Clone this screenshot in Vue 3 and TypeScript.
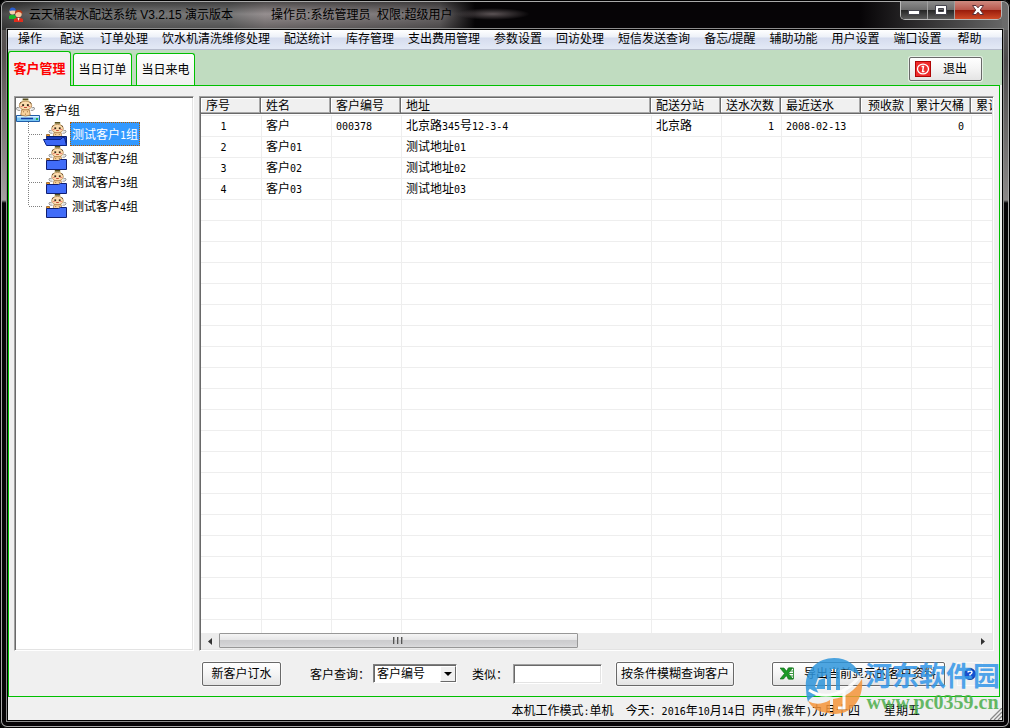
<script setup lang="ts">
import { h, ref, type FunctionalComponent } from 'vue'

// Chinese text whose Latin runs are set in a narrow half-width face
const Mixed: FunctionalComponent<{ text: string }> = (props) =>
  props.text
    .split(/([\x20-\x7e]+)/)
    .filter((run) => run !== '')
    .map((run) => h('span', { class: /^[\x20-\x7e]/.test(run) ? 'half' : 'full' }, run))
Mixed.props = ['text']

const menus: string[] = [
  '操作', '配送', '订单处理', '饮水机清洗维修处理', '配送统计', '库存管理', '支出费用管理', '参数设置',
  '回访处理', '短信发送查询', '备忘/提醒', '辅助功能', '用户设置', '端口设置', '帮助',
]
const tabs: string[] = ['客户管理', '当日订单', '当日来电']
const activeTab = ref(0)

const groups: string[] = ['测试客户1组', '测试客户2组', '测试客户3组', '测试客户4组']
const activeGroup = ref(0)

interface Column { title: string; cls: string }
const columns: Column[] = [
  { title: '序号', cls: 'c-no' },
  { title: '姓名', cls: 'c-name' },
  { title: '客户编号', cls: 'c-code' },
  { title: '地址', cls: 'c-addr' },
  { title: '配送分站', cls: 'c-station' },
  { title: '送水次数', cls: 'c-times num' },
  { title: '最近送水', cls: 'c-last' },
  { title: '预收款', cls: 'c-prepaid num' },
  { title: '累计欠桶', cls: 'c-owed num' },
  { title: '累计欠款', cls: 'c-debt' },
]
const customers: string[][] = [
  ['1', '客户', '000378', '北京路345号12-3-4', '北京路', '1', '2008-02-13', '', '0', ''],
  ['2', '客户01', '', '测试地址01', '', '', '', '', '', ''],
  ['3', '客户02', '', '测试地址02', '', '', '', '', '', ''],
  ['4', '客户03', '', '测试地址03', '', '', '', '', '', ''],
]
const blankRows = 40
const field = ref('客户编号')
const keyword = ref('')
</script>

<template>
  <div class="window">
    <header class="titlebar">
      <svg class="app-icon" viewBox="0 0 16 16" width="16" height="16">
        <path d="M1 9q3-3 7 0v3H1z" fill="#19b52c" />
        <circle cx="4.500" cy="4.500" r="3" fill="#f4cfae" />
        <path d="M1.500 4q0-3.500 3-3.500T8 3.500H4z" fill="#2b5fd0" />
        <path d="M6 15v-3q4-3 9 0v3z" fill="#e02c1c" />
        <circle cx="10.500" cy="7" r="3.200" fill="#f8c69c" />
        <path d="M7 7q-.5-4 3.500-4T14.500 7q-2-2-4-2T7 7z" fill="#b8391a" />
        <path d="M9.500 11l1 3 1-3z" fill="#fff" />
      </svg>
      <h1 class="caption">云天桶装水配送系统 V3.2.15 演示版本</h1>
      <span class="operator">操作员:系统管理员&nbsp; 权限:超级用户</span>
      <div class="sysbuttons">
        <button class="sys" aria-label="最小化">
          <svg viewBox="0 0 14 12" width="14" height="12"><rect x="1.500" y="6.500" width="11" height="4" fill="#fff" stroke="#45454f" /></svg>
        </button>
        <button class="sys" aria-label="最大化">
          <svg viewBox="0 0 14 12" width="14" height="12"><path d="M1.500 1.500h11v9h-11zM4.500 4.500v3h5v-3z" fill="#fff" fill-rule="evenodd" stroke="#45454f" /></svg>
        </button>
        <button class="sys close" aria-label="关闭">
          <svg viewBox="0 0 14 12" width="14" height="12"><path d="M1.500 1.500h3.500l2 2.300 2-2.300h3.500L9.300 6l3.200 4.500H9L7 8.200l-2 2.300H1.500L4.700 6z" fill="#fff" stroke="#5a3038" /></svg>
        </button>
      </div>
    </header>

    <div class="client">
      <nav class="menubar">
        <button v-for="m in menus" :key="m" class="menu">{{ m }}</button>
      </nav>

      <div class="tabstrip">
        <button
          v-for="(t, i) in tabs"
          :key="t"
          class="tab"
          :class="{ active: i === activeTab }"
          @click="activeTab = i"
        >{{ t }}</button>
        <button class="btn exit">
          <svg viewBox="0 0 16 16" width="16" height="16">
            <rect width="16" height="16" fill="#b00606" />
            <rect x="1" y="1" width="14" height="14" fill="#ef2b2b" />
            <ellipse cx="8" cy="8" rx="5.500" ry="4.800" fill="none" stroke="#fff" stroke-width="1.300" />
            <path d="M6.500 5.500h2l-1 5h2" fill="none" stroke="#fff" stroke-width="1.400" />
          </svg>
          <span>退出</span>
        </button>
      </div>

      <main class="panel">
        <svg class="defs" width="0" height="0">
          <symbol id="baby" viewBox="0 0 20 19">
            <rect x="7" y="0" width="6" height="2" fill="#59501f" />
            <rect x="6" y="2" width="8" height="1" fill="#e9dfa0" />
            <ellipse cx="10" cy="7.500" rx="6.500" ry="4.800" fill="#fbdcae" stroke="#a5753c" stroke-width=".8" />
            <path d="M4 5.500l1.500-2M16 5.500l-1.500-2" stroke="#5a3b17" stroke-width="1" />
            <rect x="6.500" y="6" width="2" height="2" fill="#372817" />
            <rect x="11.500" y="6" width="2" height="2" fill="#372817" />
            <rect x="5" y="8" width="2" height="1" fill="#f0726a" />
            <rect x="13" y="8" width="2" height="1" fill="#f0726a" />
            <path d="M8.500 9.500h3" stroke="#c0392b" />
            <path d="M3.500 10Q0 8.500.5 11q.5 2 4 1.500M16.500 10q3.500-1.500 3 1-.5 2-4 1.500" fill="#fff" stroke="#777" stroke-width=".9" />
            <path d="M6 12h8l1 5.500q-5 2-10 0z" fill="#f8d29d" stroke="#a5753c" stroke-width=".8" />
            <path d="M7.500 14h1M11.500 14h1M9.500 16.500h1" stroke="#93652f" />
          </symbol>
        </svg>

        <div class="workarea">
          <div class="tree sunken">
            <div class="root">
              <svg viewBox="0 0 24 24" width="24" height="24">
                <path d="M.5 17.500h23v6H.5z" fill="#78c5f4" stroke="#205da8" />
                <path d="M1 18h22v1.500H1z" fill="#d5f0ff" />
                <path d="M5 20.500h12" stroke="#123ca0" stroke-width="1.500" />
                <rect x="20" y="20" width="2" height="2" fill="#21b24b" />
                <use href="#baby" x="0" y="0" width="19" height="19" />
              </svg>
              <span class="root-label">客户组</span>
            </div>
            <ul class="branch">
              <li v-for="(g, i) in groups" :key="g" class="leaf">
                <svg viewBox="0 0 24 24" width="24" height="24">
                  <use href="#baby" x="5" y="0" width="19" height="17" />
                  <path d="M3.500 14.500v-2h3v2" fill="#f59a28" stroke="#7d4a10" stroke-width=".7" />
                  <path v-if="i === activeGroup" d="M3.500 14.500h20v9h-19z" fill="#1a3cbc" stroke="#091e6c" />
                  <path v-if="i === activeGroup" d="M.5 17.500h17l2-2h2l2 8h-20z" fill="#3b66f5" stroke="#0a2384" />
                  <path v-else d="M3.500 14.500h12l2-1h6v10h-20z" fill="#416cf8" stroke="#101e70" />
                </svg>
                <button class="leaf-label" :class="{ selected: i === activeGroup }" @click="activeGroup = i">
                  <Mixed :text="g" />
                </button>
              </li>
            </ul>
          </div>

          <div class="grid sunken">
            <div class="viewport">
              <table>
                <colgroup><col v-for="c in columns" :key="c.title" :class="c.cls" /></colgroup>
                <thead>
                  <tr><th v-for="c in columns" :key="c.title" :class="c.cls">{{ c.title }}</th></tr>
                </thead>
                <tbody>
                  <tr v-for="row in customers" :key="row[0]">
                    <td v-for="(cell, i) in row" :key="i" :class="columns[i].cls"><Mixed :text="cell" /></td>
                  </tr>
                  <tr v-for="n in blankRows" :key="'b' + n" aria-hidden="true">
                    <td v-for="c in columns" :key="c.title"></td>
                  </tr>
                </tbody>
              </table>
            </div>
            <div class="hscroll">
              <button class="arrow" aria-label="向左滚动"><svg viewBox="0 0 4 7" width="4" height="7"><path d="M4 0v7L0 3.500z" fill="#333" /></svg></button>
              <div class="track">
                <div class="thumb"><i></i><i></i><i></i></div>
              </div>
              <button class="arrow" aria-label="向右滚动"><svg viewBox="0 0 4 7" width="4" height="7"><path d="M0 0v7l4-3.500z" fill="#333" /></svg></button>
            </div>
          </div>
        </div>

        <form class="query" @submit.prevent>
          <button type="button" class="btn order">新客户订水</button>
          <label for="field" class="field-label">客户查询：</label>
          <span class="combo">
            <select id="field" v-model="field">
              <option>客户编号</option>
              <option>姓名</option>
              <option>地址</option>
            </select>
            <span class="drop"><svg viewBox="0 0 8 4" width="8" height="4"><path d="M0 0h8L4 4z" /></svg></span>
          </span>
          <label for="keyword" class="like-label">类似：</label>
          <input id="keyword" v-model="keyword" type="text" class="sunken" />
          <button type="submit" class="btn search">按条件模糊查询客户</button>
          <button type="button" class="btn export">
            <svg viewBox="0 0 14 13" width="14" height="13">
              <path d="M8 1h5.500v11H8z" fill="#fff" stroke="#3b9440" />
              <path d="M9 4h4M9 6.500h4M9 9h4" stroke="#3b9440" />
              <path d="M0 1h4l2.500 3L9 1h3.500L8.300 6.500 13 12H9L6.300 8.800 3.500 12H0l4.500-5.500z" fill="#1c9a28" stroke="#0c6413" stroke-width=".6" />
            </svg>
            <span>导出当前显示的客户资料</span>
          </button>
          <button type="button" class="help" aria-label="帮助">
            <svg viewBox="0 0 12 12" width="12" height="12">
              <circle cx="6" cy="6" r="5.500" fill="#174fd0" stroke="#0c338f" />
              <path d="M4 4.500Q4 3 6 3t2 1.500Q8 5.500 6 6.500v1M6 8.500v1.300" fill="none" stroke="#fff" stroke-width="1.400" />
            </svg>
          </button>
        </form>
      </main>

      <footer class="status">
        <span class="mode"><Mixed text="本机工作模式:单机" /></span>
        <span class="today"><Mixed text="今天：2016年10月14日 丙申(猴年)九月十四" /></span>
        <span class="weekday">星期五</span>
        <svg class="grip" viewBox="0 0 12 12" width="12" height="12"><path d="M0 12L12 0M4 12l8-8M8 12l4-4" stroke="#888" stroke-width="1.300" /></svg>
      </footer>
    </div>

    <div class="watermark">
      <svg viewBox="0 0 58 58" width="58" height="58">
        <path d="M1 32C-1 14 12 1 29 1c13 0 23 7 26 18-8-6-14-8-20-6v20h-4V12h-5v21h-4V18l-9 3-3 8 4 8q-9 3-11 8-2-6-2-13z" fill="#2f96dc" />
        <path d="M14 23l6-2v11h-9z" fill="#2f96dc" />
        <path d="M4 33q12 8 26 4 14-4 25-18" fill="none" stroke="#fff" stroke-width="3" />
        <path d="M57 22c2 20-10 35-27 35-4 0-7-1-9-2h7V42Q46 40 57 22z" fill="#f5953a" />
        <path d="M3 44q10 6 22-1v13Q10 56 3 44z" fill="#f5953a" />
        <path d="M39 33v18h-6" fill="none" stroke="#fff" stroke-width="3" />
      </svg>
      <div class="mark-text">
        <span class="mark-name">河东软件园</span>
        <span class="mark-url">www.pc0359.cn</span>
      </div>
    </div>
  </div>
</template>

<style>
body {
  margin: 0;
  background: #000;
}
.half {
  font-family: 'DejaVu Sans Mono', 'Liberation Mono', monospace;
  font-size: 10px;
  line-height: 0;
  white-space: pre;
}
</style>

<style scoped>
.window {
  position: relative;
  box-sizing: border-box;
  display: flex;
  flex-direction: column;
  height: 100vh;
  padding: 0 8px 8px;
  overflow: hidden;
  border-radius: 7px;
  color: #000;
  font: 12px/16px 'Liberation Sans', 'Noto Sans CJK SC', sans-serif;
  box-shadow: inset 0 0 0 1px #000, inset 0 0 0 2px #a9a9a9;
  background:
    radial-gradient(ellipse at 50% 50%, #5b5355 0%, transparent 70%) 455px 8px / 75px 12px no-repeat,
    linear-gradient(180deg, rgba(0, 0, 0, .55) 0, transparent 14px, rgba(0, 0, 0, .35) 30px) 0 0 / 480px 30px no-repeat,
    linear-gradient(90deg, #484848 0, #787878 60px, #777 230px, #968f90 265px, #7b7677 400px, #6d696a 440px, #060406 475px) 0 0 / 480px 30px no-repeat,
    linear-gradient(90deg, transparent 0, #6b6b6b 100%) 100% 0 / 150px 30px no-repeat,
    linear-gradient(180deg, #5a5a5a 0, #55504f 50px, #a5a0a0 200px, #060406 203px) 0 0 / 8px 100% no-repeat,
    linear-gradient(180deg, #6b6b6b 0, #4d4a4b 60px, #8b8888 200px, #060406 203px) 100% 0 / 8px 100% no-repeat,
    #060406;
}
button,
input,
select {
  margin: 0;
  padding: 0;
  border: 0;
  font: inherit;
  color: inherit;
  background: none;
}
svg {
  display: block;
  flex: none;
}

.titlebar {
  display: flex;
  align-items: center;
  flex: none;
  height: 30px;
}
.caption {
  margin: 0 0 0 5px;
  font-size: 12px;
  font-weight: 400;
  white-space: nowrap;
}
.operator {
  margin-left: 38px;
  white-space: nowrap;
}
.sysbuttons {
  display: flex;
  align-self: flex-start;
  margin-left: auto;
  height: 18px;
  margin-top: 1px;
  border: 1px solid #b9b9b9;
  border-top: 0;
  border-radius: 0 0 5px 5px;
  overflow: hidden;
}
.sys {
  display: flex;
  align-items: center;
  justify-content: center;
  width: 27px;
  border-right: 1px solid #a0a0a0;
  background: linear-gradient(#8d8d8d 0, #6b6b6b 50%, #262626 52%, #5a5a5a 100%);
}
.sys.close {
  width: 46px;
  border-right: 0;
  background: linear-gradient(#cf8a80 0, #b9564b 50%, #9a1c0c 52%, #cf4a27 100%);
}

.client {
  flex: 1;
  min-height: 0;
  display: flex;
  flex-direction: column;
  background: #f0f0f0;
  box-shadow: 0 0 0 1px #000, 0 0 0 2px #8c8c8c;
}
.client > * {
  flex: none;
}
.menubar {
  display: flex;
  height: 20px;
  box-sizing: border-box;
  padding-left: 1px;
  border-bottom: 1px solid #b6bccc;
  background: linear-gradient(#fff 0, #edf1f8 7px, #d5dcee 8px, #e2e8f5 18px);
  overflow: hidden;
}
.menu {
  min-width: 42px;
  padding: 0 7px;
  line-height: 19px;
  white-space: nowrap;
}

.tabstrip {
  display: flex;
  align-items: flex-end;
  height: 35px;
  background: #c0dcc0;
}
.tab {
  box-sizing: border-box;
  width: 59px;
  height: 32px;
  margin-right: 4px;
  border: 1px solid #00c000;
  border-bottom: 0;
  border-radius: 3px 3px 0 0;
  background: linear-gradient(#fff, #f0f0f0);
  white-space: nowrap;
}
.tab.active {
  position: relative;
  width: 63px;
  height: 35px;
  margin: 0 2px -1px 0;
  background: #f0f0f0;
  color: #f00;
  font-size: 13px;
  font-weight: 700;
}

.btn {
  box-sizing: border-box;
  height: 24px;
  border: 1px solid #696969;
  border-radius: 2px;
  box-shadow: 0 0 0 1px rgba(255, 255, 255, .6);
  background: linear-gradient(#fff, #f4f4f4 50%, #e4e4e4);
  white-space: nowrap;
}
.exit {
  display: flex;
  align-items: center;
  gap: 12px;
  width: 73px;
  margin: 0 20px 4px auto;
  padding-left: 5px;
}

.client > .panel {
  flex: 1;
  min-height: 0;
  box-sizing: border-box;
  display: flex;
  flex-direction: column;
  margin-right: 2px;
  padding: 10px 5px 0;
  border: 1px solid #00c000;
}
.defs {
  position: absolute;
}
.workarea {
  flex: 1;
  min-height: 0;
  display: flex;
  gap: 5px;
}
.sunken {
  box-sizing: border-box;
  border: 1px solid;
  border-color: #a0a0a0 #fff #fff #a0a0a0;
  box-shadow: inset 1px 1px 0 #696969, inset -1px -1px 0 #e3e3e3;
  background: #fff;
}
.tree {
  width: 180px;
  padding: 1px;
}
.root,
.leaf {
  display: flex;
  align-items: center;
  height: 24px;
}
.root-label {
  margin-left: 4px;
  padding-top: 2px;
}
.branch {
  margin: 0;
  padding: 0 0 0 12px;
  list-style: none;
}
.leaf {
  padding-left: 15px;
  background:
    linear-gradient(90deg, #fff 50%, transparent 50%) 0 12px / 2px 1px repeat-x,
    linear-gradient(#808080, #808080) 0 12px / 15px 1px no-repeat,
    repeating-linear-gradient(180deg, #808080 0 1px, transparent 1px 2px) 0 0 / 1px 100% no-repeat;
}
.leaf:last-child {
  background:
    linear-gradient(90deg, #fff 50%, transparent 50%) 0 12px / 2px 1px repeat-x,
    linear-gradient(#808080, #808080) 0 12px / 15px 1px no-repeat,
    repeating-linear-gradient(180deg, #808080 0 1px, transparent 1px 2px) 0 0 / 1px 12px no-repeat;
}
.leaf-label {
  box-sizing: border-box;
  height: 24px;
  margin-left: 3px;
  padding: 1px 1px 0;
  border: 1px solid transparent;
  white-space: nowrap;
}
.leaf-label.selected {
  border: 1px dotted #b35c00;
  background: #3399ff;
  color: #fff;
}

.grid {
  flex: 1;
  min-width: 0;
  display: flex;
  flex-direction: column;
  padding: 1px;
}
.viewport {
  flex: 1;
  min-height: 0;
  overflow: hidden;
}
table {
  width: 830px;
  table-layout: fixed;
  border-collapse: separate;
  border-spacing: 0;
}
col.c-no,
col.c-times,
col.c-owed,
col.c-debt {
  width: 60px;
}
col.c-name,
col.c-code,
col.c-station {
  width: 70px;
}
col.c-addr {
  width: 250px;
}
col.c-last {
  width: 80px;
}
col.c-prepaid {
  width: 50px;
}
th {
  height: 16px;
  padding: 0 5px;
  border-bottom: 1px solid #fff;
  background: #f0f0f0;
  background-clip: padding-box;
  box-shadow: inset -1px -1px 0 #696969, inset -2px -2px 0 #a8a8a8, inset 1px 1px 0 #fff;
  font-weight: 400;
  line-height: 16px;
  text-align: left;
  white-space: nowrap;
}
td {
  height: 20px;
  padding: 0 4px;
  border-top: 1px solid #eee;
  border-left: 1px solid #eee;
  line-height: 20px;
  white-space: nowrap;
}
td:first-child {
  border-left: 0;
}
td.c-no {
  padding: 0 15px 0 0;
  text-align: center;
}
th.num,
td.num {
  padding-right: 7px;
  text-align: right;
}
th.num {
  padding-left: 0;
}
.hscroll {
  display: flex;
  flex: none;
  height: 16px;
  background: #ececec;
}
.arrow {
  display: flex;
  align-items: center;
  justify-content: center;
  width: 18px;
}
.track {
  flex: 1;
}
.thumb {
  box-sizing: border-box;
  display: flex;
  align-items: center;
  justify-content: center;
  gap: 2px;
  width: 47.5%;
  height: 15px;
  border: 1px solid #979797;
  border-radius: 1px;
  background: linear-gradient(#f5f5f5 0, #e6e6e7 45%, #ccccce 50%, #d2d2d4 80%, #dcdcdd 100%);
}
.thumb i {
  width: 1px;
  height: 7px;
  border-right: 1px solid #aaa;
  background: #555;
}

.query {
  display: flex;
  align-items: center;
  height: 45px;
  padding-left: 188px;
}
.query > * {
  flex: none;
}
.order {
  width: 79px;
}
.field-label {
  width: 60px;
  margin: 3px 3px 0 29px;
}
.combo {
  position: relative;
  width: 84px;
  height: 19px;
}
.combo select {
  box-sizing: border-box;
  width: 100%;
  height: 19px;
  padding: 0 18px 0 3px;
  appearance: none;
  border: 1px solid;
  border-color: #808080 #fff #fff #808080;
  border-radius: 0;
  box-shadow: inset 1px 1px 0 #696969;
  background: #fff;
  line-height: 16px;
}
.drop {
  position: absolute;
  top: 2px;
  right: 1px;
  box-sizing: border-box;
  display: flex;
  align-items: center;
  justify-content: center;
  width: 16px;
  height: 16px;
  border: 1px solid;
  border-color: #fff #696969 #696969 #fff;
  background: #f0f0f0;
  pointer-events: none;
}
.like-label {
  width: 36px;
  margin: 3px 5px 0 15px;
}
#keyword {
  width: 89px;
  height: 20px;
  padding: 0 3px;
}
.search {
  width: 118px;
  margin-left: 14px;
}
.export {
  display: flex;
  align-items: center;
  gap: 10px;
  width: 173px;
  margin-left: 38px;
  padding-left: 7px;
}
.help {
  display: flex;
  align-items: center;
  justify-content: center;
  box-sizing: border-box;
  width: 26px;
  height: 24px;
  margin-left: 12px;
  border: 1px solid #fafafa;
}

.status {
  display: flex;
  align-items: center;
  justify-content: flex-end;
  height: 23px;
  padding-top: 4px;
  box-sizing: border-box;
  white-space: nowrap;
}
.mode {
  margin-right: 12px;
}
.today {
  margin-right: 24px;
}
.weekday {
  margin-right: 70px;
}
.grip {
  align-self: flex-end;
}

.watermark {
  position: absolute;
  right: 10px;
  bottom: 13px;
  display: flex;
  gap: 2px;
  pointer-events: none;
  opacity: .85;
}
.mark-text {
  display: flex;
  flex-direction: column;
  align-items: center;
  white-space: nowrap;
}
.mark-name {
  padding-top: 2px;
  color: #3296e8;
  font: 700 27px/32px 'Noto Sans CJK SC', sans-serif;
}
.mark-url {
  color: #4cae4c;
  font: 700 20px/22px 'Liberation Serif', serif;
}
</style>
